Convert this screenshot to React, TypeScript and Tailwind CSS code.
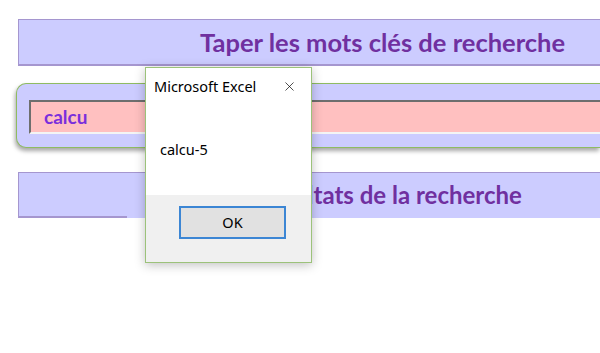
import { X } from "lucide-react"

export default function App() {
    return (
        <main className="relative w-[600px] h-[353px] overflow-hidden bg-white font-['Lato','Liberation_Sans',sans-serif]">
            <div className="flex flex-col pt-[19px] pl-[18px]">
                <div className="h-[47px] border-t border-l border-b-2 border-[#a596cf] bg-[#ccccff] flex items-center pl-[181px]">
                    <h1 className="font-bold text-[25.5px] text-[#7030a0] whitespace-nowrap">Taper les mots clés de recherche</h1>
                </div>
                <div className="mt-[17px] ml-[-2px] h-[65px] rounded-l-[10px] border border-r-0 border-[#8fbb62] bg-[#ccccff] pt-[16px] pl-[12px] shadow-[-1px_3px_4px_rgba(0,0,0,0.35)]">
                    <div className="h-[34px] bg-[#ffc0c0] border-t-2 border-l-2 border-[#6e6e6e] border-b-2 border-b-[#f4f4f4] flex items-center pl-[13px]">
                        <span className="font-bold text-[19px] text-[#7a2fdc]">calcu</span>
                    </div>
                </div>
                <div className="mt-[24px] h-[46px] border-t border-l border-[#a596cf] bg-[#ccccff] flex flex-col">
                    <div className="flex-1 flex items-center pl-[237px]">
                        <h2 className="font-bold text-[24px] text-[#7030a0] whitespace-nowrap">Résultats de la recherche</h2>
                    </div>
                    <div className="h-[2px] w-[108px] bg-[#a596cf]"></div>
                </div>
            </div>

            <div className="absolute left-[145px] top-[67px] w-[167px] h-[196px] border border-[#9cc27a] bg-white flex flex-col shadow-[0_2px_10px_rgba(0,0,0,0.25)] font-['Noto_Sans','Open_Sans',sans-serif]">
                <div className="h-[37px] flex items-center justify-between pl-[8px] pr-[14px]">
                    <span className="text-[14.5px] text-black">Microsoft Excel</span>
                    <X size={15} strokeWidth={1.1} className="text-black" />
                </div>
                <div className="h-[90px] flex items-start pl-[14px] pt-[37px]">
                    <span className="text-[14.5px] text-black leading-none">calcu-5</span>
                </div>
                <div className="flex-1 bg-[#f0f0f0] flex justify-start pl-[33px] pt-[11px]">
                    <button className="w-[107px] h-[33px] border-2 border-[#3c86d4] bg-[#e1e1e1] text-[14.5px] text-black flex items-center justify-center">OK</button>
                </div>
            </div>
        </main>
    )
}
